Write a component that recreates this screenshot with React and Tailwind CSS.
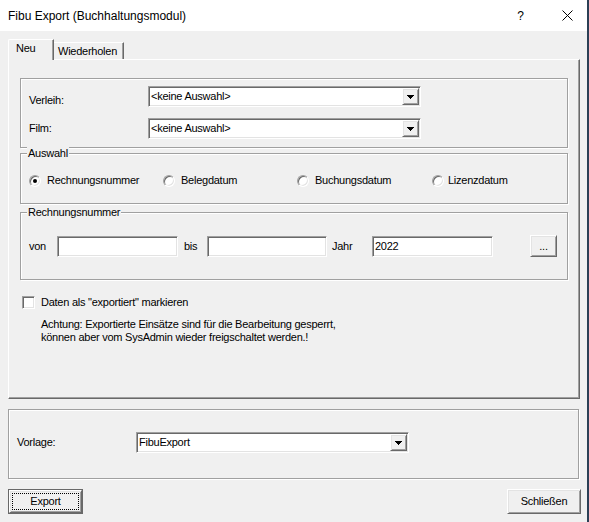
import React from "react";

const SUNKEN =
  "border border-t-[#a0a0a0] border-l-[#a0a0a0] border-r-white border-b-white shadow-[inset_1px_1px_0_#696969,inset_-1px_-1px_0_#e3e3e3] bg-white";
const RAISED =
  "border border-t-white border-l-white border-r-[#696969] border-b-[#696969] shadow-[inset_1px_1px_0_#e3e3e3,inset_-1px_-1px_0_#a0a0a0] bg-[#f0f0f0]";
const ETCHED =
  "border border-[#a0a0a0] shadow-[1px_1px_0_#ffffff,inset_1px_1px_0_#ffffff]";

function Arrow() {
  return (
    <svg width="7" height="4" viewBox="0 0 7 4" shapeRendering="crispEdges">
      <rect x="0" y="0" width="7" height="1" fill="#000" />
      <rect x="1" y="1" width="5" height="1" fill="#000" />
      <rect x="2" y="2" width="3" height="1" fill="#000" />
      <rect x="3" y="3" width="1" height="1" fill="#000" />
    </svg>
  );
}

function Combo({ value }) {
  return (
    <div className={`flex h-[21px] w-[273px] p-[1px] ${SUNKEN}`}>
      <div className="flex flex-1 items-center pl-[1px] leading-[13px]">{value}</div>
      <div className={`flex h-[17px] w-[17px] items-center justify-center ${RAISED}`}>
        <Arrow />
      </div>
    </div>
  );
}

function Radio({ checked }) {
  return (
    <span
      className={`flex h-[12px] w-[12px] shrink-0 items-center justify-center rounded-full ${SUNKEN}`}
    >
      {checked && <span className="h-[4px] w-[4px] rounded-full bg-black" />}
    </span>
  );
}

function RadioItem({ label, checked, w }) {
  return (
    <div className={`flex items-center gap-[6px] ${w}`}>
      <Radio checked={checked} />
      <span className="leading-[13px]">{label}</span>
    </div>
  );
}

function GroupLabel({ children }) {
  return (
    <div className="-mt-[7px] ml-[6px] w-fit bg-[#f0f0f0] px-[1px] leading-[13px]">
      {children}
    </div>
  );
}

function Edit({ value, w }) {
  return (
    <div className={`flex h-[21px] items-center pl-[2px] leading-[13px] ${w} ${SUNKEN}`}>
      {value}
    </div>
  );
}

export default function App() {
  return (
    <div className="flex h-[522px] w-[589px] overflow-hidden bg-[#f0f0f0] font-['Liberation_Sans',Arial,sans-serif] text-[11px] tracking-[-0.25px] text-black">
      <div className="flex w-[587px] flex-col">
        {/* Title bar */}
        <div className="flex h-[31px] items-center bg-white pl-[8px] text-[12px] tracking-normal">
          <span className="leading-[16px]">Fibu Export (Buchhaltungsmodul)</span>
          <span className="ml-auto leading-[16px]">?</span>
          <svg className="ml-[38px] mr-[14px]" width="11" height="11" viewBox="0 0 11 11">
            <path d="M0.5 0.5 L10.5 10.5 M10.5 0.5 L0.5 10.5" stroke="#000" strokeWidth="1" />
          </svg>
        </div>

        <div className="flex flex-col px-[8px]">
          {/* Tabs */}
          <div className="mt-[8px] flex h-[20px] items-end">
            <div className="relative z-10 -mb-[1px] flex h-[21px] w-[46px] items-start rounded-tl-[2px] border-l border-t border-r border-l-white border-t-white border-r-[#696969] bg-[#f0f0f0] pl-[7px] pt-[2px] leading-[13px] shadow-[inset_-1px_0_0_#a0a0a0]">
              Neu
            </div>
            <div className="flex h-[17px] w-[70px] items-center border-t border-r border-t-white border-r-[#696969] pl-[4px] leading-[13px] shadow-[inset_-1px_0_0_#a0a0a0]">
              Wiederholen
            </div>
          </div>

          {/* Tab panel */}
          <div className="flex h-[340px] w-[572px] flex-col border border-l-white border-t-white border-r-[#696969] border-b-[#696969] pl-[11px] pt-[18px] shadow-[inset_-1px_-1px_0_#a0a0a0]">
            {/* Group 1 */}
            <div className={`flex h-[70px] w-[548px] flex-col pl-[8px] pt-[7px] ${ETCHED}`}>
              <div className="flex items-start">
                <span className="mt-[8px] w-[119px] leading-[13px]">Verleih:</span>
                <Combo value="<keine Auswahl>" />
              </div>
              <div className="mt-[11px] flex items-center">
                <span className="w-[119px] leading-[13px]">Film:</span>
                <Combo value="<keine Auswahl>" />
              </div>
            </div>

            {/* Auswahl */}
            <div className={`mt-[5px] flex h-[51px] w-[548px] flex-col ${ETCHED}`}>
              <GroupLabel>Auswahl</GroupLabel>
              <div className="mt-[14px] flex h-[13px] items-center pl-[8px]">
                <RadioItem label="Rechnungsnummer" checked w="w-[134px]" />
                <RadioItem label="Belegdatum" w="w-[134px]" />
                <RadioItem label="Buchungsdatum" w="w-[135px]" />
                <div className="flex items-center gap-[4px]">
                  <Radio />
                  <span className="leading-[13px]">Lizenzdatum</span>
                </div>
              </div>
            </div>

            {/* Rechnungsnummer */}
            <div className={`mt-[8px] flex h-[68px] w-[548px] flex-col ${ETCHED}`}>
              <GroupLabel>Rechnungsnummer</GroupLabel>
              <div className="mt-[16px] flex h-[22px] items-center pl-[8px]">
                <span className="w-[28px] leading-[13px]">von</span>
                <Edit w="w-[121px]" />
                <span className="ml-[6px] w-[23px] leading-[13px]">bis</span>
                <Edit w="w-[120px]" />
                <span className="ml-[5px] w-[40px] leading-[13px]">Jahr</span>
                <Edit w="w-[121px]" value="2022" />
                <div
                  className={`ml-[37px] flex h-[22px] w-[27px] items-center justify-center leading-[13px] ${RAISED}`}
                >
                  ...
                </div>
              </div>
            </div>

            {/* Checkbox */}
            <div className="ml-[2px] mt-[16px] flex h-[13px] items-center">
              <span className={`h-[13px] w-[13px] shrink-0 ${SUNKEN}`} />
              <span className="ml-[6px] leading-[13px]">Daten als "exportiert" markieren</span>
            </div>
            <div className="ml-[21px] mt-[9px] leading-[13px]">
              <div>Achtung: Exportierte Einsätze sind für die Bearbeitung gesperrt,</div>
              <div>können aber vom SysAdmin wieder freigschaltet werden.!</div>
            </div>
          </div>

          {/* Vorlage group */}
          <div className={`mt-[10px] flex h-[70px] w-[571px] items-start pl-[8px] pt-[22px] ${ETCHED}`}>
            <div className="flex items-center">
              <span className="w-[119px] leading-[13px]">Vorlage:</span>
              <Combo value="FibuExport" />
            </div>
          </div>

          {/* Buttons */}
          <div className="mt-[10px] flex w-[573px] justify-between">
            <div className="h-[25px] w-[75px] border border-[#696969] bg-[#f0f0f0]">
              <div className="flex h-full w-full border border-t-white border-l-white border-r-[#696969] border-b-[#696969] p-[1px] shadow-[inset_1px_1px_0_#e3e3e3,inset_-1px_-1px_0_#a0a0a0]">
                <div className="m-[1px] flex flex-1 items-center justify-center border border-dotted border-black leading-[13px]">
                  Export
                </div>
              </div>
            </div>
            <div
              className={`flex h-[25px] w-[74px] items-center justify-center leading-[13px] ${RAISED}`}
            >
              Schließen
            </div>
          </div>
        </div>
      </div>
      <div className="w-[2px] bg-[#2b3f55]" />
    </div>
  );
}
